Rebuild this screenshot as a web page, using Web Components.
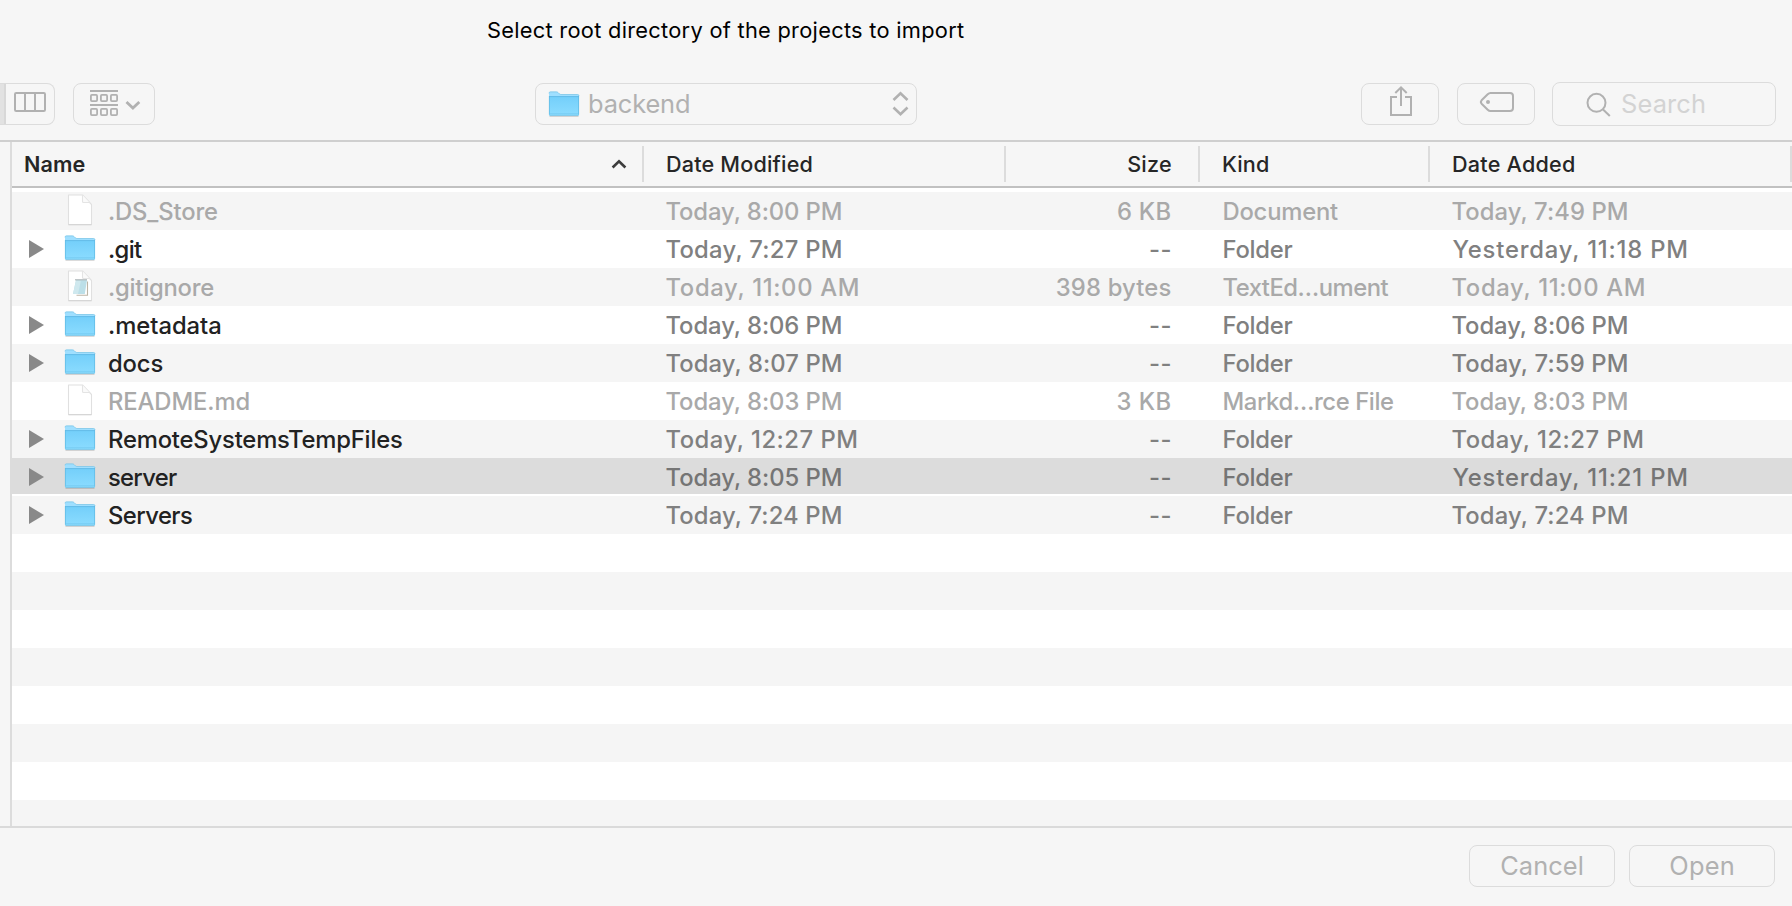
<!DOCTYPE html>
<html lang="en">
<head>
<meta charset="utf-8">
<title>Select root directory</title>
<style>
html,body{margin:0;height:100%;overflow:hidden;background:#f6f6f6}
body{font-family:Inter,"Liberation Sans",sans-serif}
</style>
</head>
<body>
<open-dialog></open-dialog>
<script>
const define=(name,html,setup)=>{
  const t=document.createElement('template');t.innerHTML=html;
  customElements.define(name,class extends HTMLElement{
    connectedCallback(){
      if(this.shadowRoot)return;
      this.attachShadow({mode:'open'}).append(t.content.cloneNode(true));
      if(setup)setup.call(this,this.shadowRoot);
    }
  });
};

/* A label tracked so that its ink spans exactly the given width. */
const pen=document.createElement('canvas').getContext('2d');
define('fit-label',`<style>:host{display:block;white-space:pre;line-height:1.2}span{display:block;width:max-content}</style><span><slot></slot></span>`,function(root){
  const s=root.querySelector('span'),cs=getComputedStyle(this),text=this.textContent,ink=+this.getAttribute('ink');
  pen.font=`${cs.fontWeight} ${cs.fontSize} ${cs.fontFamily}`;
  const m=pen.measureText(text),nat=m.actualBoundingBoxLeft+m.actualBoundingBoxRight;
  const ls=(ink-nat)/(text.length-1);
  s.style.letterSpacing=ls+'px';
  s.style.marginLeft=m.actualBoundingBoxLeft+'px';
  s.style.marginRight=(m.actualBoundingBoxRight-m.width-ls)+'px';
});

define('folder-icon',`<style>:host{display:block;width:32px;height:26px}svg{display:block}</style>
<svg width="32" height="26" viewBox="0 0 32 26">
<defs><linearGradient id="g" x1="0" y1="0" x2="0" y2="1"><stop offset="0" stop-color="#74cffa"/><stop offset="1" stop-color="#8bdcff"/></linearGradient></defs>
<path d="M1.5 25.3H30.5" stroke="#000" stroke-opacity=".16" stroke-width="1.2"/>
<path d="M1 2.2Q1 .8 2.4 .8H8.4Q9.4 .8 10 1.4L11.4 2.8Q12 3.4 13 3.4H29.6Q31 3.4 31 4.8V8H1Z" fill="#9fdfff"/>
<path d="M1 2.4Q1 .9 2.4 .9H8.4Q9.4 .9 10 1.5L11.4 2.9Q12 3.5 13 3.5H29.6Q31 3.5 31 5" fill="none" stroke="#7cc6e8" stroke-width=".8"/>
<path d="M1 5.6H31V23.4Q31 24.6 29.8 24.6H2.2Q1 24.6 1 23.4Z" fill="url(#g)"/>
<path d="M1 5.6H31" stroke="#63bce8" stroke-width="1"/>
<path d="M1.4 5V23.6M30.6 5V23.6M1.5 24.3H30.5" stroke="#5fb8e2" stroke-opacity=".8" stroke-width=".9"/>
<path d="M2 22.6H30" stroke="#76cbf2" stroke-width=".8"/>
</svg>`);

define('document-icon',`<style>:host{display:block;width:26px;height:34px}svg{display:block}.pad{display:none}:host([pad]) .pad{display:inline}</style>
<svg width="26" height="34" viewBox="0 0 26 34">
<path d="M1.5 2H15.5L24.5 11.5V31.5H1.5Z" fill="#fff" stroke="#e0e0e0" stroke-width="1.1" stroke-linejoin="round"/>
<path d="M1.5 31.8H24.5" stroke="#d2d2d2" stroke-width="1"/>
<path d="M15.5 2V8.5Q15.5 9.5 16.5 9.5H22.5" fill="#fafafa" stroke="#e4e4e4" stroke-width="1.1"/>
<g class="pad"><path d="M20.5 12.5V26.3H9.5" fill="none" stroke="#bdb5a6" stroke-width="1.1"/>
<path d="M9 11.3H20L17.8 25H6Z" fill="#bcdfe8"/><path d="M9 11.3H14L11 25H6Z" fill="#cfe8ee"/>
<path d="M8.5 10.8H20.5" stroke="#7d8a8e" stroke-width="1.5" stroke-dasharray="1 1"/></g>
</svg>`);

define('tool-button',`<style>:host{display:flex;box-sizing:border-box;height:42px;border:1.4px solid #dcdcdc;border-radius:8px;align-items:center;justify-content:center;color:#b1b1b1;font-size:25.4px;font-weight:430}</style><slot></slot>`);

define('dialog-toolbar',`<style>
:host{display:grid;grid-template-columns:480px 1fr 431px;height:58px;box-sizing:border-box;align-items:start;color:#b1b1b1}
svg{display:block;flex:none;fill:none;stroke:#b1b1b1}
.left,.right{display:flex;align-items:flex-start}
.left{gap:18px}
.seg{width:55px;border-left:0;border-radius:0 8px 8px 0;justify-content:flex-start;background:linear-gradient(90deg,#e2e2e2 0 4px,#d8d8d8 4px 6px,transparent 6px)}
.view{width:82px}
.path{width:382px;margin-left:55px;justify-content:flex-start}
.path folder-icon{margin:0 9px 0 12px}
.path fit-label{margin-top:1px}
.path .arrows{margin-left:auto;margin-right:7px}
.right{gap:18px}
.right tool-button{width:78px}
.right .search{width:224px;height:44px;margin:-1px 0 0 -1px;justify-content:flex-start}
.search fit-label{color:#d3d3d3;margin-top:1px}
</style>
<div class="left">
<tool-button class="seg"><svg width="55" height="40" viewBox="0 0 55 40" stroke-width="2"><rect x="15" y="9" width="30" height="18" rx="1.2"/><path d="M25 9V27M35 9V27"/></svg></tool-button>
<tool-button class="view"><svg width="80" height="40" viewBox="0 0 80 40" stroke-width="1.8"><path d="M16 7H44M16 21H44" stroke-width="2"/><rect x="16.9" y="10.9" width="6.2" height="6.2" rx="1"/><rect x="26.9" y="10.9" width="6.2" height="6.2" rx="1"/><rect x="36.9" y="10.9" width="6.2" height="6.2" rx="1"/><rect x="16.9" y="24.9" width="6.2" height="6.2" rx="1"/><rect x="26.9" y="24.9" width="6.2" height="6.2" rx="1"/><rect x="36.9" y="24.9" width="6.2" height="6.2" rx="1"/><path d="M52.5 18L58.9 24L65.3 18" stroke-width="2.8"/></svg></tool-button>
</div>
<div><tool-button class="path"><folder-icon></folder-icon><fit-label ink="100">backend</fit-label><svg class="arrows" width="18" height="28" viewBox="0 0 18 28" stroke-width="2.6"><path d="M2.5 10L9.5 3.2L16.5 10M2.5 17.5L9.5 24.3L16.5 17.5"/></svg></tool-button></div>
<div class="right">
<tool-button><svg width="76" height="40" viewBox="0 0 76 40" stroke-width="2"><path d="M35 13H29V31H49V13H43M39 22V3M33.3 9L39 3.3L44.7 9"/></svg></tool-button>
<tool-button><svg width="76" height="40" viewBox="0 0 76 40" stroke-width="2"><path d="M32.5 9H52Q55 9 55 12V24Q55 27 52 27H32.5Q31 27 29.7 25.7L23.6 19.7Q22.1 18 23.6 16.3L29.7 10.3Q31 9 32.5 9Z"/><circle cx="30" cy="18" r="2" fill="#b1b1b1" stroke="none"/></svg></tool-button>
<tool-button class="search"><svg width="69" height="42" viewBox="0 0 69 42" stroke-width="2"><circle cx="43.5" cy="19.8" r="9"/><path d="M49.8 26.2L56.8 33"/></svg><fit-label ink="83">Search</fit-label></tool-button>
</div>`);

define('list-header',`<style>
:host{display:grid;grid-template-columns:632px 362px 194px 230px 1fr;height:46px;box-sizing:border-box;border-bottom:2px solid #c1c1c1;background:#f6f6f6;font-size:21.6px;font-weight:450;color:#262626}
div{display:flex;align-items:center;margin:4px 0;border-right:2px solid #dcdcdc;padding-left:23px}
fit-label{margin-top:2px}
.first{padding-left:13px;font-weight:600}
svg{display:block;margin-left:auto;margin-right:15px}
.size{justify-content:flex-end;padding:0 27px 0 0}
</style>
<div class="first"><fit-label ink="59.5">Name</fit-label><svg width="16" height="12" viewBox="0 0 16 12"><path d="M1.6 9.5L8 3.3L14.4 9.5" fill="none" stroke="#3d3d3d" stroke-width="2.6"/></svg></div>
<div><fit-label ink="144.5">Date Modified</fit-label></div>
<div class="size"><fit-label ink="42.8">Size</fit-label></div>
<div><fit-label ink="45">Kind</fit-label></div>
<div><fit-label ink="121">Date Added</fit-label></div>`);

define('file-row',`<style>
:host{display:grid;grid-template-columns:97px 535px 362px 194px 230px 1fr;height:38px;align-items:center;font-size:23.8px;font-weight:450;color:#808080;box-sizing:border-box}
:host([dim]){color:#a9a9a9}
:host([selected]){background:#dcdcdc;box-shadow:inset 0 -2px #fff;color:#757575}
fit-label{margin-top:2px}
.lead{display:flex;align-items:center;height:36px}
.tri{display:block;margin-left:17px;width:15px}
folder-icon{margin:-2px 0 0 20px}
document-icon{margin:-2px 0 0 23px}
.name{color:#222}:host([dim]) .name{color:#a9a9a9}
.c{padding-left:22.5px}.kind{padding-left:23.5px}.n{display:flex;justify-content:flex-end;padding-right:29.5px}
</style>`,function(root){
  const [name,w,mod,mw,size,sw,kind,kw,add,aw]=this.data;
  const dir=kind==='Folder';
  const box=document.createElement('template');
  box.innerHTML=`<div class="lead"><svg class="tri" height="18" viewBox="0 0 15 18">${dir?'<path d="M0 0L15 9L0 18Z" fill="#898989"/>':''}</svg>${dir?'<folder-icon></folder-icon>':`<document-icon ${name==='.gitignore'?'pad':''}></document-icon>`}</div>
<div class="name"><fit-label ink="${w}">${name}</fit-label></div>
<div class="c"><fit-label ink="${mw}">${mod}</fit-label></div>
<div class="n"><fit-label ink="${sw}">${size}</fit-label></div>
<div class="kind"><fit-label ink="${kw}">${kind}</fit-label></div>
<div class="c"><fit-label ink="${aw}">${add}</fit-label></div>`;
  root.append(box.content);
});

define('file-list',`<style>
:host{display:block;overflow:hidden;border-top:4px solid #fff;background:repeating-linear-gradient(#f5f5f5 0 38px,#fff 38px 76px) padding-box}
</style>`,function(root){
  [['.DS_Store',108,'Today, 8:00 PM',174.5,'6 KB',52.5,'Document',114.5,'Today, 7:49 PM',174.5],
   ['.git',33,'Today, 7:27 PM',174.5,'--',20.5,'Folder',69,'Yesterday, 11:18 PM',234],
   ['.gitignore',104.3,'Today, 11:00 AM',191.5,'398 bytes',113.7,'TextEd…ument',165,'Today, 11:00 AM',191.5],
   ['.metadata',111.3,'Today, 8:06 PM',174.5,'--',20.5,'Folder',69,'Today, 8:06 PM',174.5],
   ['docs',53.5,'Today, 8:07 PM',174.5,'--',20.5,'Folder',69,'Today, 7:59 PM',174.5],
   ['README.md',139.5,'Today, 8:03 PM',174.5,'3 KB',53,'Markd…rce File',169.5,'Today, 8:03 PM',174.5],
   ['RemoteSystemsTempFiles',293,'Today, 12:27 PM',190,'--',20.5,'Folder',69,'Today, 12:27 PM',190],
   ['server',68,'Today, 8:05 PM',174.5,'--',20.5,'Folder',69,'Yesterday, 11:21 PM',234],
   ['Servers',83,'Today, 7:24 PM',174.5,'--',20.5,'Folder',69,'Today, 7:24 PM',174.5]
  ].forEach(d=>{
    const r=document.createElement('file-row');r.data=d;
    if(d[6]!=='Folder')r.toggleAttribute('dim',true);
    if(d[0]==='server')r.toggleAttribute('selected',true);
    root.append(r);
  });
});

define('open-dialog',`<style>
:host{display:grid;grid-template-rows:83px 57px 688px 78px;width:1792px;height:906px;background:#f6f6f6;overflow:hidden}
.title{padding:17px 0 0 488px;font-size:21.8px;color:#000}
.panel{display:grid;grid-template-columns:10px 1fr;box-sizing:border-box;border-top:2px solid #cfcfcf;border-bottom:2px solid #dadada}
.table{display:grid;grid-template-rows:46px 1fr;border-left:2px solid #dcdcdc;min-height:0}
.foot{display:flex;gap:14px;justify-content:flex-end;padding:17px 17px 0 0}
.foot tool-button{width:146px}
.foot fit-label{margin-top:1px}
</style>
<div class="title"><fit-label ink="476">Select root directory of the projects to import</fit-label></div>
<dialog-toolbar></dialog-toolbar>
<div class="panel"><span></span><div class="table"><list-header></list-header><file-list></file-list></div></div>
<div class="foot"><tool-button><fit-label ink="81.5">Cancel</fit-label></tool-button><tool-button><fit-label ink="63.5">Open</fit-label></tool-button></div>`);
</script>
</body>
</html>
